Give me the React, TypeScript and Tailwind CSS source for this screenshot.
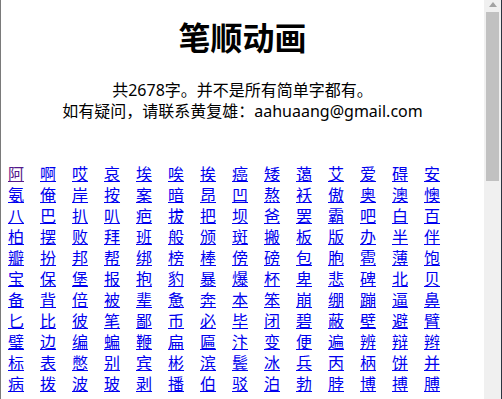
import React from 'react';

const ROWS = [
  '阿啊哎哀埃唉挨癌矮蔼艾爱碍安',
  '氨俺岸按案暗昂凹熬袄傲奥澳懊',
  '八巴扒叭疤拔把坝爸罢霸吧白百',
  '柏摆败拜班般颁斑搬板版办半伴',
  '瓣扮邦帮绑榜棒傍磅包胞雹薄饱',
  '宝保堡报抱豹暴爆杯卑悲碑北贝',
  '备背倍被辈惫奔本笨崩绷蹦逼鼻',
  '匕比彼笔鄙币必毕闭碧蔽壁避臂',
  '璧边编蝙鞭扁匾汴变便遍辨辩辫',
  '标表憋别宾彬滨鬓冰兵丙柄饼并',
  '病拨波玻剥播伯驳泊勃脖博搏膊',
];

const CHARS = ROWS.join('').split('');
const VISITED = new Set(['阿']);

export default function App() {
  return (
    <div className="flex w-[502px] h-[399px] overflow-hidden bg-white font-['Noto_Sans','Noto_Sans_CJK_SC',sans-serif] text-black">
      {/* window edge */}
      <div className="w-px shrink-0 bg-[#7a7a7a]" />

      {/* page */}
      <div className="flex-1 overflow-hidden pl-[7px]">
        <h1 className="mt-[16px] text-center text-[32px] leading-[40px] font-bold font-['Noto_Sans_CJK_SC',sans-serif] pr-[7px]">
          笔顺动画
        </h1>
        <p className="mt-[24px] text-center text-[16px] leading-[21px] pr-[7px]">
          共2678字。并不是所有简单字都有。
          <br />
          如有疑问，请联系黄复雄：aahuaang@gmail.com
        </p>

        <div className="mt-[42px] grid grid-cols-[repeat(14,32px)] auto-rows-[21px] text-[16px] leading-[21px]">
          {CHARS.map((c, i) => (
            <div key={i}>
              <a
                href="#"
                className={`underline ${VISITED.has(c) ? 'text-[#551a8b]' : 'text-[#0000ee]'}`}
              >
                {c}
              </a>
            </div>
          ))}
        </div>
      </div>

      {/* scrollbar */}
      <div className="w-[17px] shrink-0 bg-[#f0f0f0] flex flex-col">
        <div className="h-[12px] flex items-start justify-center pt-[2px]">
          <svg width="8" height="5" viewBox="0 0 8 5">
            <polygon points="4,0 8,5 0,5" fill="#a3a3a3" />
          </svg>
        </div>
        <div className="ml-[2px] w-[13px] h-[169px] bg-[#c1c1c1]" />
      </div>

      {/* right edge */}
      <div className="w-px shrink-0 bg-[#2c3440]" />
    </div>
  );
}
